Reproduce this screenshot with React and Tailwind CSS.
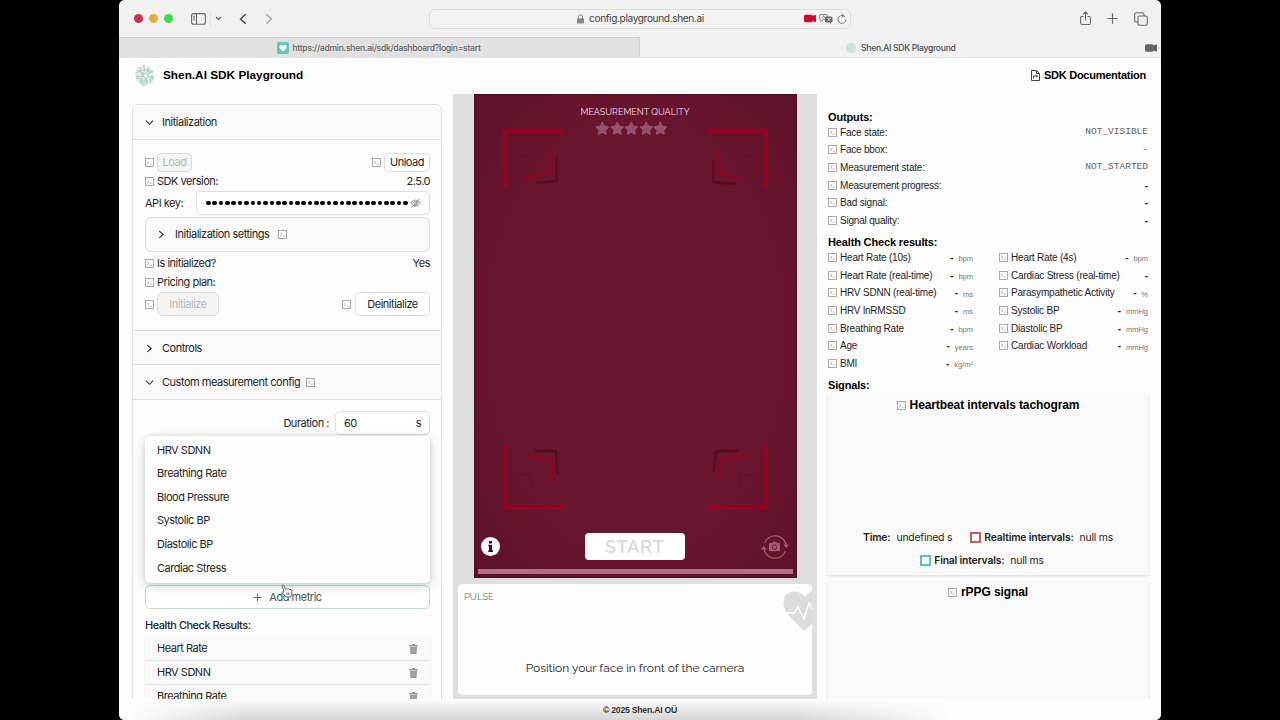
import React from 'react';
import { FaStar, FaCamera } from 'react-icons/fa';
import { BsCameraVideoFill } from 'react-icons/bs';

const dropdownMetrics = [
  'HRV SDNN',
  'Breathing Rate',
  'Blood Pressure',
  'Systolic BP',
  'Diastolic BP',
  'Cardiac Stress',
];

const selectedMetrics = ['Heart Rate', 'HRV SDNN', 'Breathing Rate'];

const outputs = [
  { label: 'Face state:', value: 'NOT_VISIBLE', mono: true },
  { label: 'Face bbox:', value: '-', mono: true },
  { label: 'Measurement state:', value: 'NOT_STARTED', mono: true },
  { label: 'Measurement progress:', value: '-' },
  { label: 'Bad signal:', value: '-' },
  { label: 'Signal quality:', value: '-' },
];

const resultsLeft = [
  ['Heart Rate (10s)', 'bpm'],
  ['Heart Rate (real-time)', 'bpm'],
  ['HRV SDNN (real-time)', 'ms'],
  ['HRV lnRMSSD', 'ms'],
  ['Breathing Rate', 'bpm'],
  ['Age', 'years'],
  ['BMI', 'kg/m²'],
];

const resultsRight = [
  ['Heart Rate (4s)', 'bpm'],
  ['Cardiac Stress (real-time)', ''],
  ['Parasympathetic Activity', '%'],
  ['Systolic BP', 'mmHg'],
  ['Diastolic BP', 'mmHg'],
  ['Cardiac Workload', 'mmHg'],
];

const CodeIcon = () => (
  <svg className="h-[9px] w-[9px] shrink-0" viewBox="0 0 9 9" fill="none" stroke="#a3a3a3">
    <rect x="0.5" y="0.5" width="8" height="8" strokeWidth="0.9" />
    <path d="M2.2 2.8 4 4.3 2.2 5.8M4.8 6.1h2" strokeWidth="0.8" />
  </svg>
);

const Chevron = ({ open }) => (
  <svg className="h-[9px] w-[9px] shrink-0" viewBox="0 0 9 9" fill="none" stroke="#333" strokeWidth="1.1">
    {open ? <path d="M1 2.7 4.5 6.3 8 2.7" /> : <path d="M2.3 1.2 6.2 4.5 2.3 7.8" />}
  </svg>
);

const TrashIcon = () => (
  <svg className="h-[10px] w-[9px]" viewBox="0 0 9 10" fill="#999">
    <path d="M3 0h3v1h2.7v1.2H.3V1H3zM1 2.8h7L7.6 10H1.4z" />
    <path d="M3.2 4v4.6M4.5 4v4.6M5.8 4v4.6" stroke="#b5b5b5" strokeWidth="0.5" />
  </svg>
);

const ShenLogo = () => (
  <svg className="h-[23px] w-[23px]" viewBox="0 0 23 23" fill="none">
    <path d="M11.5 1 20 5.5 21.5 14 16 20 10 22 3 17 1.5 8 6 3z" fill="#e3f0ed" />
    <path
      d="M11 1v4l4 2M6 3l2 4-5 2M4 6l5 3v4l-6-1M16 3l-2 3 6 2M20 7l-5 3v3l6-1M12 9l-2 3 3 3M3 14l5 1 1 5M6 18l3-3M10 22v-5l4-1v4M17 19v-4l4-1M15 13l-4 4M7 6l5 1-3 4M17 6l-4 3"
      stroke="#a3b8b9"
      strokeWidth="0.8"
    />
    <path d="M12 15v7M14 15l1 5M18 12l2 3-3 4M10 14l-3 6" stroke="#a8e0d2" strokeWidth="1.1" />
  </svg>
);

const BrowserChrome = () => (
  <>
    <div className="flex h-[37px] items-center bg-[#f1f1f1] text-[#4a4a4a]">
      <div className="flex w-[310px] items-center pl-[15px]">
        <div className="flex gap-[6px]">
          <span className="h-[9px] w-[9px] rounded-full bg-[#d0304e]" />
          <span className="h-[9px] w-[9px] rounded-full bg-[#e2b03c]" />
          <span className="h-[9px] w-[9px] rounded-full bg-[#3ddc4c]" />
        </div>
        <svg className="ml-[18px] h-[12px] w-[15px]" viewBox="0 0 15 12" fill="none" stroke="#666" strokeWidth="1.1">
          <rect x="0.6" y="0.6" width="13.8" height="10.6" rx="2" />
          <path d="M5.5 1v10M2.2 3.2h1.8M2.2 5h1.8M2.2 6.8h1.8" />
        </svg>
        <span className="ml-1 h-4 w-px bg-[#e4e4e4]" />
        <svg className="ml-[4px] h-[5px] w-[7px]" viewBox="0 0 7 5" fill="none" stroke="#666" strokeWidth="1.2">
          <path d="M1 1l2.5 2.5L6 1" />
        </svg>
        <svg className="ml-[17px] h-[12px] w-[8px]" viewBox="0 0 8 11" fill="none" stroke="#444" strokeWidth="1.4">
          <path d="M6.7.7 1.5 5.5l5.2 4.8" />
        </svg>
        <svg className="ml-[18px] h-[12px] w-[8px]" viewBox="0 0 8 11" fill="none" stroke="#a5a5a5" strokeWidth="1.4">
          <path d="M1.3.7l5.2 4.8-5.2 4.8" />
        </svg>
      </div>
      <div className="flex h-[20px] w-[422px] items-center rounded-md border border-[#dedede] bg-[#f3f3f3]">
        <svg className="ml-[147px] h-[10px] w-[7px]" viewBox="0 0 7 10" fill="none">
          <path d="M1.5 5V2.8a2 2 0 0 1 4 0V5" stroke="#888" />
          <rect y="4.3" width="7" height="5.2" rx="1" fill="#888" />
        </svg>
        <span className="ml-[5px] w-[215px] text-[10.2px] tracking-[-0.4px] text-[#444]">config.playground.shen.ai</span>
        <BsCameraVideoFill className="h-[13px] w-[12px] text-[#cf0a31]" />
        <svg className="ml-[3px] h-[10px] w-[14px]" viewBox="0 0 14 10">
          <path d="M2 .5h5q1.5 0 1.5 1.5v3.500H4L2 7.500V5.500Q.5 5.500.5 4V2Q.5.5 2 .5z" fill="#f3f3f3" stroke="#777" strokeWidth="0.8" />
          <path d="M3 4.500 4.500 1.500 6 4.500" fill="none" stroke="#777" strokeWidth="0.7" />
          <path d="M7 2.500h5q1.500 0 1.500 1.500v3q0 1.500-1.500 1.500V10L10.500 8.500H7q-1 0-1-1.500V4q0-1.500 1-1.500z" fill="#666" />
          <path d="M8 4.500h4M10 3.700v.8M8.500 7.200l2.500-2.700M9 5l2.500 2.200" fill="none" stroke="#eee" strokeWidth="0.6" />
        </svg>
        <svg className="ml-[4px] h-[11px] w-[10px]" viewBox="0 0 10 11" fill="none" stroke="#777" strokeWidth="1">
          <path d="M8.300 4.200A4 4 0 1 0 9 6.500M4.500.5 6.800 2.700 4.500 4.700" />
        </svg>
      </div>
      <div className="flex flex-1 items-center justify-end gap-[16px] pr-[13px]">
        <svg className="h-[15px] w-[11px]" viewBox="0 0 11 15" fill="none" stroke="#6b6b6b" strokeWidth="1.1">
          <path d="M3.500 5.500H1.800Q.6 5.500.6 6.700v5.600q0 1.200 1.200 1.200h7.400q1.200 0 1.200-1.200V6.700q0-1.200-1.200-1.200H7.500M5.500 9.500V1M3 3.400 5.500.9 8 3.400" />
        </svg>
        <svg className="h-[11px] w-[11px]" viewBox="0 0 11 11" stroke="#6b6b6b" strokeWidth="1.2">
          <path d="M5.500.3v10.400M.3 5.500h10.400" />
        </svg>
        <svg className="h-[14px] w-[14px]" viewBox="0 0 14 14" fill="none" stroke="#6b6b6b" strokeWidth="1.1">
          <rect x="4" y="4" width="9.300" height="9.300" rx="1.700" />
          <path d="M4 10H2.300Q.7 10 .7 8.400V2.300Q.7.7 2.300.7h6.100Q10 .7 10 2.300V4" />
        </svg>
      </div>
    </div>
    <div className="flex h-[21px] border-b border-[#e2e2e2] text-[8.6px] font-medium tracking-[-0.28px] text-[#666]">
      <div className="flex w-[521px] items-center justify-center border-t border-r border-[#d0d0d0] bg-[#e1e1e1] pt-px">
        <span className="mr-[3px] flex h-[12px] w-[12px] items-center justify-center rounded-[2px] bg-[#62c6b4]">
          <svg className="h-[8px] w-[8px]" viewBox="0 0 8 8" fill="#fff">
            <path d="M4 7.500.5 4V2L2 .7l2 1 2-1L7.500 2v2z" />
          </svg>
        </span>
        https://admin.shen.ai/sdk/dashboard?login=start
      </div>
      <div className="flex flex-1 items-center bg-[#f1f1f1] pt-[2px]">
        <span className="ml-[206px] h-[10px] w-[10px] rounded-full bg-[#c9e3dc]" />
        <span className="ml-[5px] flex-1 text-[#4d4d4d]">Shen.AI SDK Playground</span>
        <BsCameraVideoFill className="mr-[4px] h-[12px] w-[12px] text-[#666]" />
      </div>
    </div>
  </>
);

const PageHeader = () => (
  <header className="flex h-[36px] items-center justify-between pr-[15px] pb-[2px] pl-[14px] font-['Liberation_Sans',sans-serif] font-bold text-black">
    <div className="flex items-center">
      <ShenLogo />
      <h1 className="ml-[7px] pt-[2px] text-[11.8px]">Shen.AI SDK Playground</h1>
    </div>
    <div className="flex items-center text-[11px] tracking-[-0.25px]">
      <svg className="mr-[4px] h-[11px] w-[9px]" viewBox="0 0 9 11" fill="none" stroke="#444" strokeWidth="1">
        <path d="M.5.5h5l3 3v7h-8zM5.500.5v3h3M2.500 8.500v-2.500h4M5 4.700 6.500 6 5 7.300" />
      </svg>
      SDK Documentation
    </div>
  </header>
);

const PanelHeader = ({ title, open, code }) => (
  <div className="flex h-[34px] items-center bg-[#f9f9f9] pl-[12px]">
    <Chevron open={open} />
    <span className="mr-[6px] ml-[8px]">{title}</span>
    {code && <CodeIcon />}
  </div>
);

const ConfigPanel = () => (
  <div className="w-[334px] overflow-hidden pt-[10px] pl-[13px] text-[11px] tracking-[-0.48px] text-[#262626]">
    <div className="w-[310px] rounded-t-md border border-[#dfdfdf]">
      <div className="overflow-hidden rounded-t-md">
        <PanelHeader title="Initialization" open />
      </div>
      <div className="flex h-[191px] flex-col border-t border-[#dfdfdf] pt-[13px] pr-[11px] pl-[12px]">
        <div className="flex h-[19px] items-center">
          <CodeIcon />
          <button className="ml-[3px] h-[19px] w-[35px] rounded border border-[#dcdcdc] bg-[#f4f4f4] text-[#b8b8b8]">Load</button>
          <div className="flex-1" />
          <CodeIcon />
          <button className="ml-[3px] h-[19px] w-[46px] rounded border border-[#dcdcdc] bg-white">Unload</button>
        </div>
        <div className="flex h-[19px] items-center">
          <CodeIcon />
          <span className="ml-[3px] flex-1">SDK version:</span>
          <span>2.5.0</span>
        </div>
        <div className="flex h-[24px] items-center">
          <span className="w-[51px]">API key:</span>
          <div className="flex h-[24px] flex-1 items-center rounded-[5px] border border-[#dedede] bg-white pl-[9px]">
            <div className="flex w-[202px] justify-between">
              {Array.from({ length: 32 }, (_, i) => (
                <span key={i} className="h-[4.6px] w-[4.6px] shrink-0 rounded-full bg-black" />
              ))}
            </div>
            <svg className="ml-[2px] h-[10px] w-[11px]" viewBox="0 0 11 10" fill="none" stroke="#888" strokeWidth="0.9">
              <path d="M.6 5Q5.500-1 10.400 5 5.500 11 .6 5zM1.500 9.500 9.500.5M3.700 9l5.500-6" />
              <circle cx="5.500" cy="5" r="1.700" />
            </svg>
          </div>
        </div>
        <div className="mt-[2px] flex h-[35px] shrink-0 items-center rounded-md border border-[#dedede] bg-[#f9f9f9] pl-[11px]">
          <Chevron />
          <span className="mr-[9px] ml-[9px]">Initialization settings</span>
          <CodeIcon />
        </div>
        <div className="mt-[1px] flex h-[20px] items-center">
          <CodeIcon />
          <span className="ml-[3px] flex-1">Is initialized?</span>
          <span>Yes</span>
        </div>
        <div className="flex h-[18px] items-center">
          <CodeIcon />
          <span className="ml-[3px]">Pricing plan:</span>
        </div>
        <div className="mt-[1px] flex h-[24px] items-center">
          <CodeIcon />
          <button className="ml-[3px] h-[24px] w-[62px] rounded-[5px] border border-[#dcdcdc] bg-[#f4f4f4] text-[#b8b8b8]">Initialize</button>
          <div className="flex-1" />
          <CodeIcon />
          <button className="ml-[4px] h-[24px] w-[75px] rounded-[5px] border border-[#dcdcdc] bg-white">Deinitialize</button>
        </div>
      </div>
      <div className="border-t border-[#dfdfdf]">
        <PanelHeader title="Controls" />
      </div>
      <div className="-mt-px border-t border-[#dfdfdf]">
        <PanelHeader title="Custom measurement config" open code />
      </div>
      <div className="relative border-t border-[#dfdfdf] pt-[11px] pr-[11px] pl-[12px]">
        <div className="flex items-center justify-end">
          <span>Duration :</span>
          <div className="ml-[6px] flex h-[24px] w-[95px] items-center justify-between rounded-[5px] border border-[#dedede] bg-white px-[8px]">
            <span>60</span>
            <span>s</span>
          </div>
        </div>
        <button className="mt-[150px] flex h-[24px] w-full items-center justify-center gap-[7px] rounded-[5px] border border-[#b5dfd2] bg-white text-[#3d5a55]">
          <svg className="h-[9px] w-[9px]" viewBox="0 0 9 9" stroke="#4d7a70" strokeWidth="1">
            <path d="M4.500.5v8M.5 4.500h8" />
          </svg>
          Add metric
        </button>
        <div className="mt-[8px] mb-[4px] h-[16px] leading-4 font-medium">Health Check Results:</div>
        <div className="flex flex-col gap-[1px]">
          {selectedMetrics.map((metric) => (
            <div key={metric} className="flex h-[23px] items-center justify-between bg-[#f9f9f9] px-[12px] shadow-[0_1px_2px_rgba(0,0,0,0.13)]">
              <span>{metric}</span>
              <TrashIcon />
            </div>
          ))}
        </div>
        {/* metric dropdown */}
        <div className="absolute top-[36px] left-[12px] flex h-[147px] w-[285px] flex-col rounded-[5px] bg-[#fefefe] pt-[2px] shadow-[0_3px_12px_rgba(0,0,0,0.18),0_0_5px_rgba(0,0,0,0.08)]">
          {dropdownMetrics.map((metric) => (
            <div key={metric} className="flex h-[23.6px] items-center pl-[12px]">
              {metric}
            </div>
          ))}
        </div>
        {/* pointer */}
        <svg className="absolute top-[184px] left-[148px] h-[14px] w-[12px]" viewBox="0 0 12 14" fill="#fff" stroke="#555" strokeWidth="0.9">
          <path d="M1 1.500q1-1.300 2 0l1.500 3.800 1-.6 1 .5 1.200-.4.8.7 1.500 0 .8 1.200V10l-1.500 3H5L1 8.500q.4-1.300 2-.4z" />
          <path d="M6 8.500v2.500M7.700 8.500v2.500" />
        </svg>
      </div>
    </div>
  </div>
);

const CameraView = () => (
  <div className="relative h-[484px] w-[323px] shrink-0 bg-[#64142c] bg-[radial-gradient(ellipse_at_center,#68152e_60%,#5f1229_100%)] font-[Raleway,Lato,sans-serif] shadow-[inset_0_0_3px_#3d0a1a]">
    <svg className="absolute inset-0 h-[484px] w-[323px]" viewBox="474 94 323 484" fill="none">
      <g stroke="#900424" strokeWidth="5">
        <path d="M505.500 188v-57H564M708 131h57.500v57M505.500 445v62.500H564M708 507.500h57.500V445" />
      </g>
      <g stroke="#880626" strokeWidth="3.500">
        <path d="M550 151l1 22-25 5M717.500 151l2 23 23 4M528 457l22 3 2 21M747 457l-26 3-2 20" />
      </g>
      <g stroke="#590b22" strokeWidth="2.500">
        <path d="M556.500 157v24l-20 2M713.500 160v22l22 2M535 450.500l21 1 1.500 22M738 450.500l-22 1-2.500 21" />
      </g>
      <g stroke="#5c102a" strokeWidth="1">
        <path d="M520 474h12v12M753 475h-14v13M530 147v9h-10M741 147v9h10" />
      </g>
    </svg>
    <div className="relative flex h-full flex-col items-center px-[4px]">
      <div className="mt-[11px] text-[9px] leading-[14px] text-[#f0dfe4]">MEASUREMENT QUALITY</div>
      <div className="mt-[2px] mr-[7px] flex text-[#95506b]">
        {[1, 2, 3, 4, 5].map((n) => (
          <FaStar key={n} className="h-[14.6px] w-[14.6px]" />
        ))}
      </div>
      <div className="flex-1" />
      <div className="mb-[9px] flex w-full items-center justify-between pr-[4px] pl-[3px]">
        <svg className="h-[19px] w-[19px]" viewBox="0 0 19 19">
          <circle cx="9.500" cy="9.500" r="9.500" fill="#fff" />
          <path d="M8 4h3v2.500H8zM7.300 7.700H11v5.500h1V15H7.300v-1.800H8V9.300h-.7z" fill="#3a0c1c" />
        </svg>
        <button className="ml-[9px] h-[27px] w-[100px] rounded-[4px] bg-white text-[18.5px] leading-[27px] font-semibold tracking-[0.4px] text-[#dadada]">START</button>
        <span className="relative flex h-[26px] w-[28px] items-center justify-center text-[#a35a72]">
          <svg className="absolute inset-0 h-[26px] w-[28px]" viewBox="0 0 28 26" fill="none" stroke="currentColor" strokeWidth="1.300">
            <path d="M3.600 8.700A11.300 11.300 0 0 1 25.200 11.500M24.400 17.300A11.300 11.300 0 0 1 2.800 14.500" />
            <path d="M22.400 10.500h5.600l-2.800 3.800zM0 15.500h5.600l-2.800-3.800z" fill="currentColor" stroke="none" />
          </svg>
          <FaCamera className="h-[11px] w-[11px]" />
        </span>
      </div>
      <div className="mb-[4px] h-[5px] w-full bg-[#b27085]" />
    </div>
  </div>
);

const MeasurementView = () => (
  <div className="flex w-[364px] flex-col items-center bg-[#dfdfdf]">
    <CameraView />
    <div className="mt-[6px] flex h-[111px] w-[354px] flex-col overflow-hidden rounded-[4px] bg-[#fdfdfd] font-[Raleway,Lato,sans-serif]">
      <div className="flex h-[56px] justify-between pt-[6px] pl-[6px]">
        <span className="text-[9.4px] leading-[14px] text-[#777]">PULSE</span>
        <svg className="h-[42px] w-[29px]" viewBox="0 0 29 42">
          <path d="M21.500 41Q16 36 8 28 .5 21 .5 13 .8 2 11 1.500 18 1.500 22 7 25 2 29 1.500V34z" fill="#dcdcdc" />
          <path d="M1 23h10l4-6 6 12 5-16 3 6" fill="none" stroke="#fff" strokeWidth="1.500" />
        </svg>
      </div>
      <div className="flex flex-1 items-center justify-center pt-[3px] text-[11.950px] text-[#1d1d1d]">Position your face in front of the camera</div>
    </div>
  </div>
);

const ResultList = ({ items }) => (
  <div>
    {items.map(([label, unit]) => (
      <div key={label} className="flex h-[17.7px] items-center">
        <CodeIcon />
        <span className="ml-[3px] flex-1 whitespace-nowrap">{label}</span>
        <b>-</b>
        {unit && <span className="ml-[5px] pt-[3px] text-[7.500px] tracking-normal text-[#777]">{unit}</span>}
      </div>
    ))}
  </div>
);

const OutputsPanel = () => (
  <div className="w-[344px] overflow-hidden pt-[17px] pr-[13px] pl-[11px] font-['Liberation_Sans',sans-serif] text-[10px] tracking-[-0.2px] text-[#1f1f1f]">
    <h2 className="h-[12.5px] text-[11px] leading-[13px] font-bold tracking-[-0.15px] text-black">Outputs:</h2>
    {outputs.map(({ label, value, mono }) => (
      <div key={label} className="flex h-[17.6px] items-center">
        <CodeIcon />
        <span className="ml-[3px] flex-1">{label}</span>
        {mono ? (
          <span className="font-['Liberation_Mono',monospace] text-[9.500px] tracking-normal text-[#666]">{value}</span>
        ) : (
          <b>{value}</b>
        )}
      </div>
    ))}
    <h2 className="mt-[7px] h-[12.5px] text-[11px] leading-[13px] font-bold tracking-[-0.15px] text-black">Health Check results:</h2>
    <div className="grid grid-cols-[145px_149px] justify-between">
      <ResultList items={resultsLeft} />
      <ResultList items={resultsRight} />
    </div>
    <h2 className="mt-[6.6px] h-[15px] text-[11px] leading-[13px] font-bold tracking-[-0.15px] text-black">Signals:</h2>
    <div className="flex h-[181px] flex-col items-center bg-[#f9f9f9] pt-[3px] shadow-[0_1px_3px_rgba(0,0,0,0.16)]">
      <div className="flex h-[17px] items-center gap-[4px] text-[12px] font-bold tracking-[-0.1px] text-black">
        <CodeIcon />
        Heartbeat intervals tachogram
      </div>
      <div className="flex-1" />
      <div className="mb-[6px] flex flex-col items-center gap-[7px] font-[Inter,sans-serif] text-[10.400px]">
        <div className="flex h-4 items-center">
          <span className="font-semibold">Time:</span>
          <span className="mr-[18px] ml-[6px]">undefined s</span>
          <span className="mr-[3px] h-[11px] w-[11px] border-2 border-[#c2605b] bg-white" />
          <span className="font-semibold">Realtime intervals:</span>
          <span className="ml-[6px]">null ms</span>
        </div>
        <div className="mr-[12px] flex h-4 items-center">
          <span className="mr-[3px] h-[11px] w-[11px] border-2 border-[#5cc3af] bg-white" />
          <span className="font-semibold">Final intervals:</span>
          <span className="ml-[6px]">null ms</span>
        </div>
      </div>
    </div>
    <div className="mt-[7px] flex h-[182px] flex-col items-center bg-[#f9f9f9] pt-[2px] shadow-[0_1px_3px_rgba(0,0,0,0.16)]">
      <div className="flex h-[17px] items-center gap-[4px] text-[12px] font-bold tracking-[-0.1px] text-black">
        <CodeIcon />
        rPPG signal
      </div>
    </div>
  </div>
);

const App = () => {
  return (
    <div className="flex h-[720px] w-[1280px] justify-center overflow-hidden bg-black font-[Inter,sans-serif]">
      <div className="flex h-full w-[1042px] flex-col overflow-hidden rounded-[6px] bg-[#fdfdfd]">
        <BrowserChrome />
        <PageHeader />
        <main className="flex h-[605px] overflow-hidden">
          <ConfigPanel />
          <MeasurementView />
          <OutputsPanel />
        </main>
        <footer className="flex h-[21px] items-center justify-center bg-[linear-gradient(to_right,#fdfdfd_1%,transparent_12%,transparent_65%,#fdfdfd_80%),linear-gradient(to_bottom,#fdfdfd,#d6d6d6)] pt-[2px] font-['Liberation_Sans',sans-serif] text-[8.700px] font-bold tracking-[-0.25px] text-[#333]">
          © 2025 Shen.AI OÜ
        </footer>
      </div>
    </div>
  );
};

export default App;
